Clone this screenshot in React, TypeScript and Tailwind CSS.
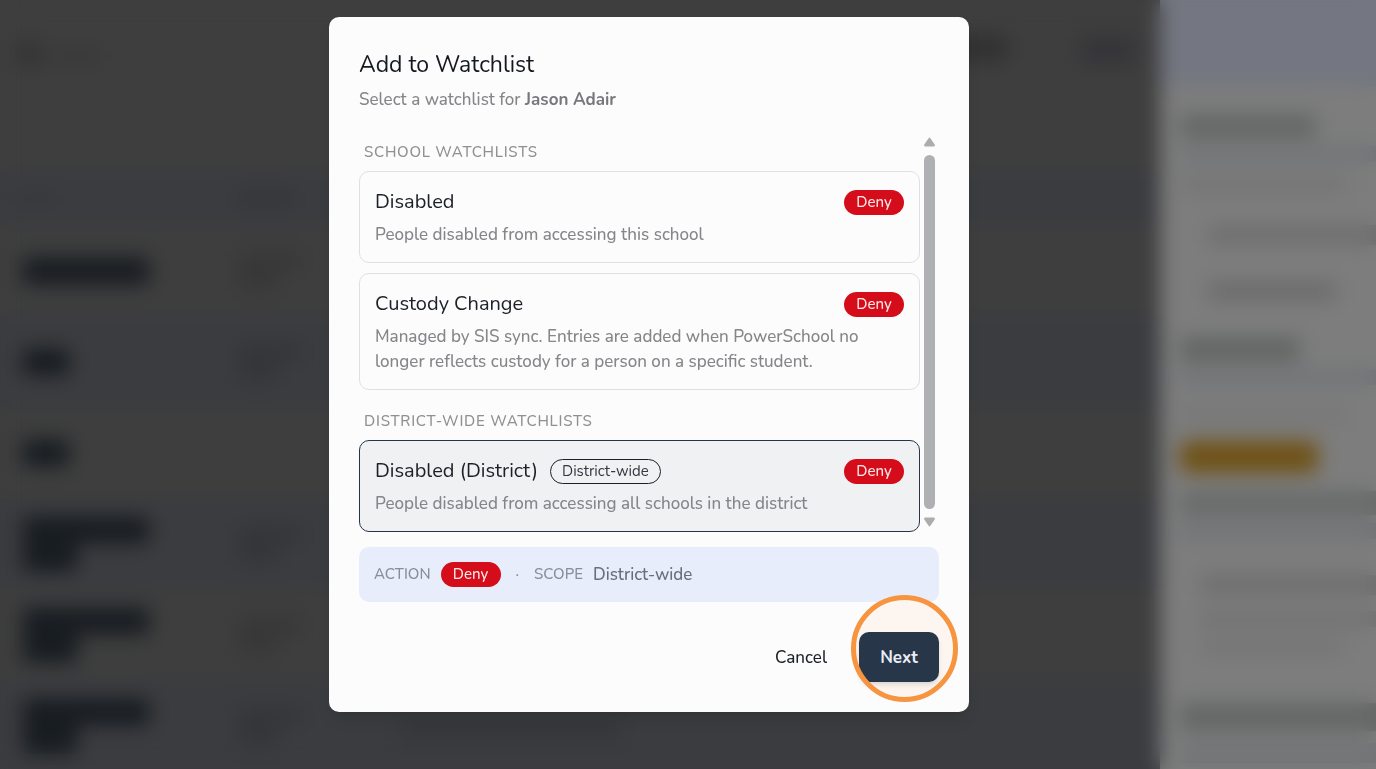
import { useState } from "react";
import clsx from "clsx";

type Watchlist = {
  id: string;
  name: string;
  description: string;
  districtWide?: boolean;
};

const schoolLists: Watchlist[] = [
  {
    id: "disabled",
    name: "Disabled",
    description: "People disabled from accessing this school",
  },
  {
    id: "custody",
    name: "Custody Change",
    description:
      "Managed by SIS sync. Entries are added when PowerSchool no longer reflects custody for a person on a specific student.",
  },
];

const districtLists: Watchlist[] = [
  {
    id: "disabled-district",
    name: "Disabled (District)",
    description: "People disabled from accessing all schools in the district",
    districtWide: true,
  },
];

// width of each name chip, one entry per line in the row
const rows = [["w-32"], ["w-12"], ["w-12"], ["w-32", "w-14"], ["w-32", "w-14"], ["w-32", "w-14"]];

function DenyBadge() {
  return (
    <span className="flex h-[25px] w-[60px] shrink-0 items-center justify-center rounded-full bg-[#d50d1b] text-[15px] leading-none font-medium text-[#fbe6e8]">
      Deny
    </span>
  );
}

function SectionLabel({ children }: { children: string }) {
  return (
    <h2 className="mb-[3px] pl-[5px] text-[15px] leading-[32px] font-medium tracking-wider text-[#8f9093] uppercase">
      {children}
    </h2>
  );
}

function WatchlistCard({
  list,
  checked,
  onSelect,
}: {
  list: Watchlist;
  checked: boolean;
  onSelect: (id: string) => void;
}) {
  return (
    <label
      className={clsx(
        "relative block cursor-pointer rounded-[10px] border p-[15px]",
        checked ? "border-[#28344a] bg-[#f0f1f3]" : "border-[#dfe0e6]",
      )}
    >
      <input
        type="radio"
        name="watchlist"
        value={list.id}
        checked={checked}
        onChange={() => onSelect(list.id)}
        className="sr-only"
      />
      <span className="flex h-[30px] items-center gap-3">
        <span className="text-[20px] leading-[30px] text-[#1c2027]">{list.name}</span>
        {list.districtWide && (
          <span className="flex h-[25px] items-center rounded-full border border-[#1c2027] px-[11px] text-[15px] leading-none text-[#33373e]">
            District-wide
          </span>
        )}
        <span className="ml-auto">
          <DenyBadge />
        </span>
      </span>
      <span className="mt-[5px] block text-[17px] leading-[25px] font-medium text-[#85868a]">{list.description}</span>
    </label>
  );
}

function ScrollArrow({ className }: { className?: string }) {
  return (
    <svg viewBox="0 0 12 10" className={clsx("h-[10px] w-full shrink-0 fill-[#abacae]", className)}>
      <path d="M5 .8a1.200 1.200 0 0 1 2 0l4.700 7a1.300 1.300 0 0 1-1.100 2H1.400a1.300 1.300 0 0 1-1.100-2z" />
    </svg>
  );
}

function Scrollbar() {
  return (
    <div aria-hidden className="mx-1 flex w-[11px] flex-col pt-px pb-[5px]">
      <ScrollArrow />
      <div className="my-2 flex-1 rounded-full bg-[#aeb0b3]" />
      <ScrollArrow className="rotate-180" />
    </div>
  );
}

function VisitorPage() {
  return (
    <div aria-hidden className="flex h-screen overflow-hidden bg-[#3e3e3e]">
      <div className="flex min-w-0 flex-1 flex-col">
        <div className="flex h-[172px] shrink-0 items-start pt-9 pr-6 pl-4">
          <div className="mt-1 size-7 rounded-full bg-[#343434]" />
          <div className="mt-3 ml-2 h-4 w-12 rounded bg-[#393939]" />
          <div className="ml-auto h-6 w-16 rounded bg-[#303030]" />
          <div className="ml-[72px] h-7 w-14 rounded bg-[#353539]" />
        </div>
        <div className="flex h-[53px] shrink-0 items-center bg-[#3b3c40] pl-4">
          <div className="h-4 w-10 rounded bg-[#38393d]" />
          <div className="ml-[182px] h-5 w-14 rounded bg-[#36373b]" />
        </div>
        {rows.map((chips, i) => (
          <div
            key={i}
            className={clsx("flex h-[91px] shrink-0 items-center pl-[22px]", i % 2 ? "bg-[#3b3c40]" : "bg-[#3e3e3e]")}
          >
            <div className="w-[216px]">
              {chips.map((width) => (
                <div key={width} className={clsx("h-7 rounded-lg bg-[#181d22]", width)} />
              ))}
            </div>
            {i !== 2 && (
              <div className={i % 2 ? "text-[#35363a]" : "text-[#383838]"}>
                <div className="h-5 w-16 bg-current" />
                <div className="h-5 w-10 bg-current" />
              </div>
            )}
            {i === 5 && <div className="mt-2 ml-24 h-5 w-56 bg-[#35363a]" />}
          </div>
        ))}
      </div>

      <div className="w-[216px] shrink-0 bg-[#7d7d7d]">
        <div className="h-[86px] bg-[#747781]" />
        <div className="pt-7 pl-5">
          <div className="h-6 w-[136px] bg-[#646766]" />
          <div className="mt-2 h-4 bg-[#717477]" />
          <div className="mt-[15px] h-4 w-[168px] bg-[#757575]" />
          <div className="mt-8 ml-7 h-5 bg-[#6f6f6f]" />
          <div className="mt-9 ml-7 h-5 w-[128px] bg-[#6c6c6c]" />
          <div className="mt-9 h-6 w-[120px] bg-[#626564]" />
          <div className="mt-2 h-4 bg-[#717477]" />
          <div className="mt-6 h-3 w-[168px] bg-[#767676]" />
          <div className="mt-5 h-8 w-[138px] rounded-lg bg-[#6f5115]" />
          <div className="mt-[18px] h-6 bg-[#686b6a]" />
          <div className="mt-2 h-4 bg-[#717477]" />
          <div className="mt-9 ml-5 h-5 bg-[#6f6f6f]" />
          <div className="mt-4 ml-5 h-4 bg-[#727272]" />
          <div className="mt-3 ml-5 h-4 w-36 bg-[#757575]" />
          <div className="mt-12 h-7 bg-[#646766]" />
          <div className="mt-3 h-5 bg-[#727476]" />
        </div>
      </div>
    </div>
  );
}

export default function App() {
  const [selected, setSelected] = useState("disabled-district");
  const current = [...schoolLists, ...districtLists].find((list) => list.id === selected);

  return (
    <div className="font-[Nunito,Lato,sans-serif]">
      <VisitorPage />

      <div className="fixed inset-0 flex items-start justify-center overflow-hidden pt-[17px] pr-[78px] backdrop-blur-[10px]">
        <form
          role="dialog"
          aria-labelledby="dialog-title"
          onSubmit={(e) => e.preventDefault()}
          className="w-full max-w-[640px] rounded-[10px] bg-[#fcfcfc] p-[30px] shadow-lg"
        >
          <h1 id="dialog-title" className="text-[23px] leading-[36px] text-[#14181f]">
            Add to Watchlist
          </h1>
          <p className="mt-1 text-[17px] leading-[25px] font-medium text-[#85868a]">
            Select a watchlist for <strong className="font-bold text-[#77787c]">Jason Adair</strong>
          </p>

          <div className="mt-6 flex">
            <div className="min-w-0 flex-1">
              <SectionLabel>School Watchlists</SectionLabel>
              <div className="space-y-[10px]">
                {schoolLists.map((list) => (
                  <WatchlistCard key={list.id} list={list} checked={list.id === selected} onSelect={setSelected} />
                ))}
              </div>
              <div className="mt-[15px]">
                <SectionLabel>District-wide Watchlists</SectionLabel>
                {districtLists.map((list) => (
                  <WatchlistCard key={list.id} list={list} checked={list.id === selected} onSelect={setSelected} />
                ))}
              </div>
            </div>
            <Scrollbar />
          </div>

          <div className="mt-[15px] flex h-[55px] items-center gap-[10px] rounded-[10px] bg-[#e7edfb] px-[15px] text-[15px] font-medium text-[#888c9b]">
            <span>ACTION</span>
            <DenyBadge />
            <span className="px-[5px]">·</span>
            <span>SCOPE</span>
            <span className="text-[17px] text-[#6a6e79]">{current?.districtWide ? "District-wide" : "School"}</span>
          </div>

          <div className="mt-[30px] flex justify-end gap-[10px]">
            <button type="button" className="h-[50px] px-[22px] text-[17px] leading-[25px] font-medium text-[#1c2027]">
              Cancel
            </button>
            <div className="relative">
              <span className="absolute -top-[37px] -left-2 size-[107px] rounded-full bg-[#fdf6f0]" />
              <button
                type="submit"
                className="relative h-[50px] w-20 rounded-[10px] bg-[#28364a] text-[17px] leading-[25px] font-bold text-[#e9edf5] shadow-md"
              >
                Next
              </button>
              <span className="pointer-events-none absolute -top-[37px] -left-2 size-[107px] rounded-full border-[5px] border-[#f79440]" />
            </div>
          </div>
        </form>
      </div>
    </div>
  );
}
